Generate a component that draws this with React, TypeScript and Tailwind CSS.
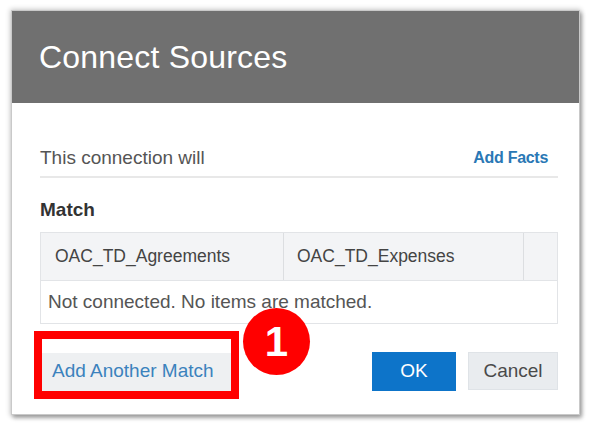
export default function App() {
    return (
        <main className="relative w-[590px] h-[427px] bg-white overflow-hidden" style={{ fontFamily: '"Liberation Sans", Arial, sans-serif' }}>
            <div className="absolute left-[11px] top-[10px] w-[569px] h-[405px] bg-white border border-[#c9c9c9] shadow-[0_0_5px_1px_rgba(0,0,0,0.2),2px_3px_4px_rgba(0,0,0,0.3)] flex flex-col">
                <div className="h-[92px] bg-[#707070] flex items-center pl-[27px]">
                    <h1 className="text-[32px] leading-none text-white tracking-[0.2px]">Connect Sources</h1>
                </div>

                <div className="flex flex-col pl-[28px] pr-[21px] pt-[37px]">
                    <div className="h-[38px] flex items-center justify-between border-b-2 border-[#e8e8e8]">
                        <span className="text-[19px] text-[#555]">This connection will</span>
                        <span className="pr-[10px] text-[16px] text-[#2a78b5] font-semibold tracking-[-0.3px]">Add Facts</span>
                    </div>

                    <div className="mt-[20px] h-[24px] flex items-center text-[19px] font-bold text-[#333]">Match</div>

                    <div className="mt-[10px] border border-[#e2e4e7]">
                        <div className="h-[48px] flex bg-[#f3f4f6] border-b border-[#e2e4e7] text-[17.5px] text-[#444]">
                            <div className="w-[243px] flex items-center pl-[14px] border-r border-[#dcdee1]">OAC_TD_Agreements</div>
                            <div className="w-[240px] flex items-center pl-[13px] border-r border-[#dcdee1]">OAC_TD_Expenses</div>
                            <div className="flex-1" />
                        </div>
                        <div className="h-[42px] flex items-center pl-[7px] text-[19px] text-[#555]">Not connected. No items are matched.</div>
                    </div>

                    <div className="mt-[28px] flex items-center justify-between">
                        <button className="w-[192px] h-[38px] bg-[#eef0f2] text-left pl-[12px] text-[19px] text-[#3b82bd]">Add Another Match</button>
                        <div className="flex gap-[12px]">
                            <button className="w-[84px] h-[39px] bg-[#0d74c9] text-white text-[19px]">OK</button>
                            <button className="w-[90px] h-[38px] bg-[#e9ecef] border border-[#dfe3e7] text-[19px] text-[#4a4a4a]">Cancel</button>
                        </div>
                    </div>
                </div>
            </div>

            <div className="absolute left-[34px] top-[331px] w-[205px] h-[68px] border-[8px] border-[#ff0000]" />
            <div className="absolute left-[243px] top-[308px] w-[67px] h-[67px] rounded-full bg-[#ff0000] flex items-center justify-center">
                <span className="text-[42px] font-bold text-white leading-none">1</span>
            </div>
        </main>
    );
}
